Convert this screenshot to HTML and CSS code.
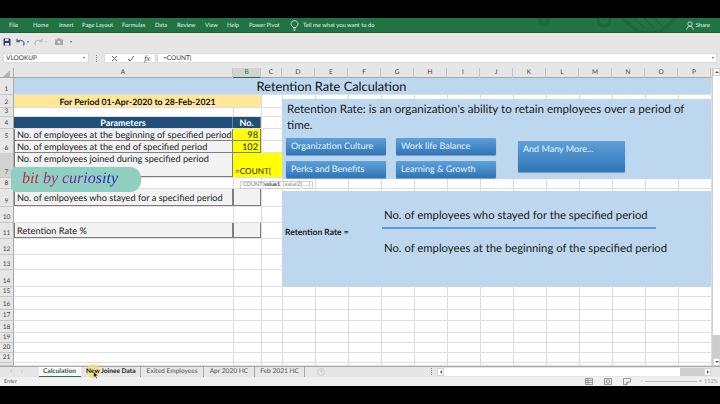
FILE: index.html
```html
<!DOCTYPE html>
<html lang="en">

<head>
  <meta charset="UTF-8">
  <meta name="viewport" content="width=device-width, initial-scale=1.0">
  <title>Retention Rate Calculation</title>
  <link rel="stylesheet" href="styles.css">
</head>

<body>

  <div class="letterbox"></div>

  <!-- Ribbon tabs -->
  <div class="ribbon">
    <span class="rtab t-file">File</span>
    <span class="rtab t-home">Home</span>
    <span class="rtab t-insert">Insert</span>
    <span class="rtab t-page">Page Layout</span>
    <span class="rtab t-formulas">Formulas</span>
    <span class="rtab t-data">Data</span>
    <span class="rtab t-review">Review</span>
    <span class="rtab t-view">View</span>
    <span class="rtab t-help">Help</span>
    <span class="rtab t-pivot">Power Pivot</span>
    <svg class="bulb" width="9" height="11" viewBox="0 0 9 11" fill="none" stroke="#e8f2ec" stroke-width="0.8">
      <path d="M3 7.5C2.6 6.2 1 5.6 1 3.8 1 2 2.6.7 4.5.7S8 2 8 3.8C8 5.6 6.4 6.2 6 7.5ZM3.2 9h2.6M3.6 10.300h1.800" />
    </svg>
    <span class="rtab">Tell me what you want to do</span>
    <svg class="ribbon-art" width="150" height="14" viewBox="0 0 150 14" fill="none" stroke="#1d673e" stroke-width="3">
      <circle cx="10" cy="3" r="4" />
      <circle cx="70" cy="2" r="6" />
      <path d="M88 0l16 14h22L142 0" />
      <path d="M100 0l10 10M110 0l10 10M120 0l8 8" stroke-width="1.500" />
    </svg>
    <span class="share">
      <svg width="8" height="9" viewBox="0 0 8 9" fill="none" stroke="#e8f2ec" stroke-width="0.8">
        <circle cx="4" cy="3" r="2.200" />
        <path d="M.6 8.700C1 6.500 2.400 5.400 4 5.400S7 6.500 7.400 8.700" />
      </svg>
      Share
    </span>
  </div>

  <!-- Quick access toolbar -->
  <div class="qat">
    <svg width="8" height="8" viewBox="0 0 8 8">
      <path d="M.5.500h6l1 1v6H.5Z" fill="#2f3f72" />
      <path d="M2 1h3.500v2H2ZM2 5h4v2.500H2Z" fill="#e6e6e6" />
    </svg>
    <svg class="undo" width="9" height="8" viewBox="0 0 9 8" fill="none" stroke="#2f5f9e" stroke-width="1.100">
      <path d="M1 .8v3h3M1.300 3.500C2.800 1.800 6.500 1.800 7.800 4.200 8.300 5.300 8 6.500 7.300 7.500" />
    </svg>
    <span class="caret dark"></span>
    <svg class="redo" width="9" height="8" viewBox="0 0 9 8" fill="none" stroke="#b9b9b9" stroke-width="1.100">
      <path d="M8 .8v3H5M7.700 3.500C6.200 1.800 2.500 1.800 1.200 4.200.7 5.300 1 6.500 1.700 7.500" />
    </svg>
    <span class="caret"></span>
    <svg class="camera" width="8" height="7" viewBox="0 0 8 7">
      <path d="M0 1.500h2L2.600.3h2.800L6 1.500h2V7H0Z" fill="#a9a9a9" />
      <circle cx="4" cy="4.100" r="1.400" fill="#e6e6e6" />
    </svg>
    <span class="caret dark more"></span>
  </div>

  <!-- Name box and formula input -->
  <div class="formula">
    <div class="namebox">VLOOKUP<span class="caret dark"></span></div>
    <span class="grip"></span>
    <div class="fbtns">
      <svg width="7" height="7" viewBox="0 0 7 7" fill="none" stroke="#555" stroke-width="0.900">
        <path d="M1 1l5 5M6 1L1 6" />
      </svg>
      <svg width="8" height="7" viewBox="0 0 8 7" fill="none" stroke="#555" stroke-width="0.900">
        <path d="M1 4l2 2 4-5" />
      </svg>
      <span class="fx">fx</span>
    </div>
    <div class="finput">=COUNT(<span class="caret dark end"></span></div>
  </div>

  <div class="body-row">
    <div class="sheet">
      <div class="row colheads">
        <span class="corner"></span>
        <span class="ch">A</span>
        <span class="ch active">B</span>
        <span class="ch">C</span>
        <span class="ch">D</span>
        <span class="ch">E</span>
        <span class="ch">F</span>
        <span class="ch">G</span>
        <span class="ch">H</span>
        <span class="ch">I</span>
        <span class="ch">J</span>
        <span class="ch">K</span>
        <span class="ch">L</span>
        <span class="ch">M</span>
        <span class="ch">N</span>
        <span class="ch">O</span>
        <span class="ch">P</span>
      </div>

      <div class="row h17">
        <span class="rh">1</span>
        <div class="cell sheet-title">Retention Rate Calculation</div>
      </div>
      <div class="row h13">
        <span class="rh">2</span>
        <div class="cell period">For Period 01-Apr-2020 to 28-Feb-2021</div>
      </div>
      <div class="row h9"><span class="rh">3</span></div>
      <div class="row h12">
        <span class="rh">4</span>
        <div class="cell thead">Parameters</div>
        <div class="cell thead">No.</div>
      </div>
      <div class="row h12">
        <span class="rh">5</span>
        <div class="cell label">No. of employees at the beginning of specified period</div>
        <div class="cell num">98</div>
      </div>
      <div class="row h12">
        <span class="rh">6</span>
        <div class="cell label">No. of employees at the end of specified period</div>
        <div class="cell num">102</div>
      </div>
      <div class="row h25">
        <span class="rh active">7</span>
        <div class="cell label top">No. of employees joined during specified period</div>
        <div class="cell editing">=COUNT(</div>
      </div>
      <div class="row h11"><span class="rh">8</span></div>
      <div class="row h18">
        <span class="rh">9</span>
        <div class="cell label">No. of emlpoyees who stayed for a specified period</div>
        <div class="cell label"></div>
      </div>
      <div class="row h16"><span class="rh">10</span></div>
      <div class="row h16">
        <span class="rh">11</span>
        <div class="cell label">Retention Rate %</div>
        <div class="cell label"></div>
      </div>
      <div class="row h16"><span class="rh">12</span></div>
      <div class="row h15"><span class="rh">13</span></div>
      <div class="row h17"><span class="rh">14</span></div>
      <div class="row h10"><span class="rh">15</span></div>
      <div class="row h13"><span class="rh">16</span></div>
      <div class="row h11"><span class="rh">17</span></div>
      <div class="row h12"><span class="rh">18</span></div>
      <div class="row h10"><span class="rh">19</span></div>
      <div class="row h10"><span class="rh">20</span></div>
      <div class="row h10"><span class="rh">21</span></div>
      <div class="row h3"><span class="rh"></span></div>

      <!-- Floating shapes -->
      <div class="panel definition">
        <p>Retention Rate: is an organization's ability to retain employees over a period of time.</p>
        <div class="chips">
          <div class="chip-col">
            <div class="chip">Organization Culture</div>
            <div class="chip">Perks and Benefits</div>
          </div>
          <div class="chip-col second">
            <div class="chip">Work life Balance</div>
            <div class="chip">Learning &amp; Growth</div>
          </div>
          <div class="chip big">And Many More...</div>
        </div>
      </div>

      <div class="panel formula-panel">
        <strong>Retention Rate =</strong>
        <div class="fraction">
          <div class="numerator">No. of employees who stayed for the specified period</div>
          <div class="denominator">No. of employees at the beginning of the specified period</div>
        </div>
      </div>

      <div class="tooltip">COUNT(<b>value1</b>, [value2], ...)</div>
      <div class="watermark"><span>bit by curiosity</span></div>
    </div>

    <div class="vscroll">
      <span class="sbtn up"></span>
      <span class="track"></span>
      <span class="sbtn down"></span>
    </div>
  </div>

  <!-- Sheet tabs -->
  <div class="tabs">
    <span class="tnav">&lsaquo;</span>
    <span class="tnav">&rsaquo;</span>
    <span class="tab active">Calculation</span>
    <span class="tab hover">New Joinee Data</span>
    <span class="tab">Exited Employees</span>
    <span class="tab">Apr 2020 HC</span>
    <span class="tab">Feb 2021 HC</span>
    <span class="addtab">+</span>
    <span class="grip"></span>
    <div class="hscroll">
      <span class="sbtn left"></span>
      <span class="thumb"></span>
      <span class="sbtn right"></span>
    </div>
    <span class="pointer"></span>
    <svg class="arrow" width="6" height="8" viewBox="0 0 6 8">
      <path d="M.5.500v6l1.500-1.300L3.200 7.500l1-.5L3 4.800h2.200Z" fill="#222" stroke="#fff" stroke-width="0.400" />
    </svg>
  </div>

  <!-- Status bar -->
  <div class="status">
    <span class="mode">Enter</span>
    <svg class="view v1" width="8" height="7" viewBox="0 0 8 7" fill="none" stroke="#777" stroke-width="0.700">
      <path d="M.5.500h7v6h-7ZM.5 2.500h7M.5 4.500h7M3 .5v6" />
    </svg>
    <svg class="view v2" width="8" height="7" viewBox="0 0 8 7" fill="none" stroke="#777" stroke-width="0.700">
      <path d="M.5.500h7v6h-7ZM2.300 2h3.400v3H2.300Z" />
    </svg>
    <svg class="view v3" width="8" height="7" viewBox="0 0 8 7" fill="none" stroke="#777" stroke-width="0.700">
      <path d="M.5.500h7v3.500H4v2.500H.5ZM4 4v2.500" />
    </svg>
    <span class="zoomer"><span class="zm">&minus;</span><span class="slider"></span><span class="zm">+</span></span>
    <span class="pct">112%</span>
  </div>

  <div class="letterbox"></div>

</body>

</html>
```
FILE: styles.css
```css
* {
  box-sizing: border-box;
}

body {
  width: 720px;
  height: 404px;
  margin: 0;
  overflow: hidden;
  display: flex;
  flex-direction: column;
  font-family: "Lato", "Open Sans", sans-serif;
  text-rendering: geometricPrecision;
  color: #1c1c1c;
  background-color: #000;
}

.letterbox {
  height: 18px;
  background-color: #000;
}

/* ribbon */

.ribbon {
  height: 15px;
  display: flex;
  align-items: center;
  padding-left: 9px;
  background-color: #217346;
  border-bottom: 1px solid #1b6239;
  color: #e8f2ec;
  font-size: 5.8px;
  position: relative;
}

.rtab {
  white-space: nowrap;
}

.t-file { width: 24px; }
.t-home { width: 26px; }
.t-insert { width: 23px; }
.t-page { width: 40px; }
.t-formulas { width: 33px; }
.t-data { width: 22px; }
.t-review { width: 28px; }
.t-view { width: 22px; }
.t-help { width: 22px; }
.t-pivot { width: 41px; }

.bulb {
  margin-right: 4px;
}

.ribbon-art {
  position: absolute;
  left: 534px;
  top: 0;
}

.share {
  margin-left: auto;
  margin-right: 10px;
  display: flex;
  align-items: center;
  gap: 2px;
}

/* toolbar */

.qat {
  height: 17px;
  display: flex;
  align-items: center;
  padding-left: 3px;
  background-color: #e6e6e6;
}

.undo {
  margin-left: 5px;
}

.redo {
  margin-left: 5px;
}

.camera {
  margin-left: 8px;
}

.caret {
  width: 0;
  height: 0;
  margin-left: 2px;
  border-left: 1.5px solid transparent;
  border-right: 1.5px solid transparent;
  border-top: 2px solid #bbb;
}

.caret.dark {
  border-top-color: #666;
}

.more {
  margin-left: 7px;
}

.formula {
  height: 18px;
  display: flex;
  align-items: flex-start;
  padding: 3px 3px 0;
  background-color: #e6e6e6;
  font-size: 6.5px;
  color: #333;
}

.namebox {
  width: 86px;
  height: 10px;
  display: flex;
  align-items: center;
  justify-content: space-between;
  padding: 0 3px 0 2px;
  background-color: #fff;
  border: 1px solid #dcdcdc;
}

.grip {
  width: 1px;
  height: 7px;
  margin: 2px 7px 0;
  border-left: 1px dotted #8c8c8c;
}

.fbtns {
  width: 52px;
  height: 10px;
  display: flex;
  align-items: center;
  justify-content: space-between;
  padding: 0 5px 0 6px;
  background-color: #fff;
  border: 1px solid #dcdcdc;
}

.fx {
  font-family: "Liberation Serif", serif;
  font-style: italic;
  font-size: 8px;
}

.finput {
  width: 560px;
  height: 10px;
  display: flex;
  align-items: center;
  padding-left: 5px;
  margin-left: 1px;
  background-color: #fff;
  border: 1px solid #dcdcdc;
}

.end {
  margin-left: auto;
  margin-right: 2px;
}

/* sheet */

.body-row {
  display: flex;
  height: 298px;
  background-color: #fff;
}

.sheet {
  width: 712px;
  position: relative;
  background:
    linear-gradient(#dcdcdc, #dcdcdc) 233px 0 / 1px 100% no-repeat,
    linear-gradient(#dcdcdc, #dcdcdc) 261px 0 / 1px 100% no-repeat,
    repeating-linear-gradient(to right, #dcdcdc 0 1px, transparent 1px 33px) 282px 0 / 430px 100% no-repeat,
    #fff;
}

.row {
  display: grid;
  grid-template-columns: 14px 219px 28px 21px repeat(13, 33px);
  border-bottom: 1px solid #e0e0e0;
}

.h3 { height: 3px; }
.h9 { height: 9px; }
.h10 { height: 10px; }
.h11 { height: 11px; }
.h12 { height: 12px; }
.h13 { height: 13px; }
.h15 { height: 15px; }
.h16 { height: 16px; }
.h17 { height: 17px; }
.h18 { height: 18px; }
.h25 { height: 25px; }

.colheads {
  height: 10px;
  border-bottom: 1px solid #a8a8a8;
  background-color: #e6e6e6;
  font-size: 6.5px;
  color: #444;
}

.corner {
  position: relative;
  border-right: 1px solid #a8a8a8;
}

.corner::after {
  content: "";
  position: absolute;
  right: 3px;
  bottom: 1px;
  border-left: 7px solid transparent;
  border-bottom: 7px solid #b5b5b5;
}

.ch {
  text-align: center;
  line-height: 9px;
  border-right: 1px solid #c6c6c6;
}

.ch.active {
  background-color: #d2d2d2;
  border-bottom: 1px solid #217346;
  height: 10px;
  color: #217346;
}

.rh {
  background-color: #e6e6e6;
  border-right: 1px solid #a8a8a8;
  border-bottom: 1px solid #c6c6c6;
  display: flex;
  align-items: flex-end;
  justify-content: center;
  padding-bottom: 1px;
  margin-bottom: -1px;
  font-size: 6.5px;
  line-height: 7px;
  color: #444;
}

.rh.active {
  background-color: #d2d2d2;
  color: #217346;
}

.cell {
  display: flex;
  align-items: center;
  min-width: 0;
  white-space: nowrap;
}

.sheet-title {
  grid-column: 2 / -1;
  justify-content: center;
  padding-right: 62px;
  background-color: #bdd7ee;
  font-size: 12.8px;
  color: #111;
}

.period {
  grid-column: 2 / 4;
  justify-content: center;
  background-color: #ffe699;
  font-size: 8.7px;
  font-weight: 700;
  color: #111;
}

.thead {
  justify-content: center;
  background-color: #1f4e79;
  border-right: 1px solid #7f7f7f;
  font-size: 9px;
  font-weight: 700;
  color: #fff;
}

.label {
  padding-left: 2px;
  background-color: #f2f2f2;
  border: 1px solid #7f7f7f;
  border-top-width: 0;
  font-size: 9.2px;
  color: #222;
}

.label.top {
  align-items: flex-start;
}

.num {
  justify-content: flex-end;
  padding-right: 2px;
  background-color: #ff0;
  border: 1px solid #7f7f7f;
  border-top-width: 0;
  border-left-width: 0;
  font-size: 9.2px;
  color: #222;
}

.editing {
  grid-column: 3 / 5;
  align-items: flex-end;
  padding: 0 0 1px 2px;
  background-color: #ff0;
  font-size: 8.2px;
  color: #222;
}

/* floating shapes */

.panel {
  position: absolute;
  left: 282px;
  width: 429px;
  background-color: #bdd7ee;
  color: #1a1a1a;
}

.definition {
  top: 31px;
  height: 80px;
  padding: 3px 5px 0;
}

.definition p {
  margin: 0;
  font-size: 11.6px;
  line-height: 15.5px;
}

.chips {
  display: flex;
  margin: 5px 0 0 -1px;
}

.chip-col {
  display: flex;
  flex-direction: column;
  gap: 6px;
  width: 100px;
}

.chip-col.second {
  margin-left: 10px;
}

.chip {
  height: 17px;
  padding: 2px 0 0 5px;
  background: linear-gradient(#5fa0da, #2e75b6);
  box-shadow: 0 1px 1px #7d99b3;
  border-radius: 1px;
  font-size: 9px;
  color: #eaf3fb;
}

.chip.big {
  width: 107px;
  height: 31px;
  margin: 3px 0 0 22px;
}

.formula-panel {
  top: 123px;
  height: 96px;
  display: flex;
  align-items: flex-start;
  padding-left: 3px;
}

.formula-panel strong {
  width: 97px;
  margin-top: 36px;
  font-size: 8.5px;
  line-height: 10px;
}

.fraction {
  padding-top: 17px;
  font-size: 11.3px;
  line-height: 15px;
  white-space: nowrap;
}

.numerator {
  width: 274px;
  padding: 0 0 4px 2px;
  margin-bottom: 12px;
  border-bottom: 2px solid #5b9bd5;
}

.denominator {
  padding-left: 2px;
}

.tooltip {
  position: absolute;
  left: 240px;
  top: 113px;
  height: 8px;
  padding: 0 2px;
  background-color: #fff;
  border: 1px solid #d0d0d0;
  font-size: 5.5px;
  line-height: 6px;
  color: #777;
  white-space: nowrap;
}

.tooltip b {
  font-weight: 700;
  color: #444;
}

.watermark {
  position: absolute;
  left: 11px;
  top: 99px;
  width: 130px;
  height: 25px;
  padding-left: 11px;
  background-color: #8fd0c0;
  border-radius: 5px 11px 11px 5px;
  font-family: "Liberation Serif", serif;
  font-style: italic;
  font-size: 16px;
  line-height: 24px;
  white-space: nowrap;
}

/* red to blue fade on the letters */
.watermark span {
  background: linear-gradient(to right, #d3213a, #8a2a9c 45%, #1a1ad0);
  -webkit-background-clip: text;
  background-clip: text;
  color: transparent;
}

/* scrollbars */

.vscroll {
  width: 8px;
  display: flex;
  flex-direction: column;
  background-color: #f0f0f0;
  border-left: 1px solid #cfcfcf;
}

.track {
  flex: 1;
  background: linear-gradient(#fff 0 92%, #cdcdcd 92%);
}

.sbtn {
  width: 7px;
  height: 8px;
  display: flex;
  align-items: center;
  justify-content: center;
  background-color: #fff;
  border: 1px solid #d4d4d4;
}

.sbtn::after {
  content: "";
  border: 2px solid transparent;
}

.up::after {
  border-bottom-color: #555;
  border-top-width: 0;
}

.down::after {
  border-top-color: #555;
  border-bottom-width: 0;
}

.left::after {
  border-right-color: #555;
  border-left-width: 0;
}

.right::after {
  border-left-color: #555;
  border-right-width: 0;
}

/* sheet tabs */

.tabs {
  height: 11px;
  display: flex;
  align-items: flex-start;
  padding-left: 10px;
  background-color: #e6e6e6;
  border-top: 1px solid #a8a8a8;
  font-size: 6.6px;
  color: #555;
  position: relative;
}

.tnav {
  width: 11px;
  font-size: 7px;
  color: #aaa;
  line-height: 9px;
}

.tab {
  height: 10px;
  line-height: 9px;
  padding: 0 5.5px;
  white-space: nowrap;
  border-right: 1px solid #a8a8a8;
}

.tab.active {
  width: 42px;
  margin-left: 7px;
  padding: 0 4px;
  background-color: #fff;
  border-right: 0;
  border-bottom: 1px solid #217346;
  font-weight: 700;
  color: #1c5a38;
}

.tab.hover {
  position: relative;
  z-index: 1;
  padding: 0 4.5px 0 5px;
  font-weight: 700;
  color: #222;
}

.addtab {
  width: 8px;
  height: 8px;
  margin: 1px 0 0 12px;
  border: 1px solid #ccc;
  border-radius: 50%;
  font-size: 6px;
  line-height: 6px;
  text-align: center;
  color: #bbb;
}

.tabs .grip {
  margin: 1px 0 0 auto;
}

.hscroll {
  width: 274px;
  height: 8px;
  margin: 1px 9px 0 5px;
  display: flex;
  background-color: #cfcfcf;
}

.thumb {
  width: 236px;
  margin-right: auto;
  background-color: #fff;
}

.pointer {
  position: absolute;
  left: 86px;
  top: -3px;
  width: 14px;
  height: 14px;
  border-radius: 50%;
  background-color: #f3de82;
  opacity: 0.8;
}

.arrow {
  position: absolute;
  left: 93px;
  top: 4px;
  z-index: 2;
}

/* status bar */

.status {
  height: 9px;
  display: flex;
  align-items: center;
  padding-left: 4px;
  background-color: #f0f0f0;
  font-size: 5.5px;
  color: #555;
}

.mode {
  margin-right: auto;
}

.view {
  margin-right: 11px;
}

.zoomer {
  display: flex;
  align-items: center;
  width: 62px;
  gap: 2px;
  margin-left: -2px;
}

.zm {
  font-size: 6px;
  color: #888;
}

.slider {
  flex: 1;
  height: 1px;
  background-color: #bbb;
}

.pct {
  width: 18px;
  text-align: right;
  padding-right: 2px;
  color: #999;
}
```
